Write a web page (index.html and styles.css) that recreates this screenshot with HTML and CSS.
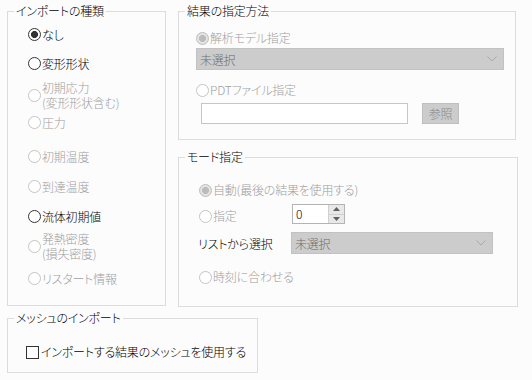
FILE: index.html
```html
<!DOCTYPE html>
<html lang="ja">
<head>
    <meta charset="UTF-8">
    <meta name="viewport" content="width=device-width, initial-scale=1.0">
    <title>インポート</title>

    <link rel="stylesheet" href="styles.css">
</head>

<body>
    <div class="dialog">
        <div class="top-row">
            <fieldset class="group import-type">
                <legend>インポートの種類</legend>
                <div class="import-list">
                    <div class="option"><span class="radio checked"></span><span class="text">なし</span></div>
                    <div class="option"><span class="radio"></span><span class="text">変形形状</span></div>
                    <div class="option disabled"><span class="radio"></span><span class="text">初期応力<br>(変形形状含む)</span></div>
                    <div class="option disabled"><span class="radio"></span><span class="text">圧力</span></div>
                    <div class="option disabled"><span class="radio"></span><span class="text">初期温度</span></div>
                    <div class="option disabled"><span class="radio"></span><span class="text">到達温度</span></div>
                    <div class="option"><span class="radio"></span><span class="text">流体初期値</span></div>
                    <div class="option disabled"><span class="radio"></span><span class="text">発熱密度<br>(損失密度)</span></div>
                    <div class="option disabled"><span class="radio"></span><span class="text">リスタート情報</span></div>
                </div>
            </fieldset>

            <div class="right-col">
                <fieldset class="group result-spec">
                    <legend>結果の指定方法</legend>
                    <div class="result-body">
                        <div class="option disabled"><span class="radio checked"></span><span class="text">解析モデル指定</span></div>
                        <div class="combo result-combo">
                            <span class="combo-text">未選択</span>
                            <svg class="chevron" width="10" height="6" viewBox="0 0 10 6"><polyline points="0.5,0.5 5,5 9.5,0.5" fill="none" stroke="#a9a9a9" stroke-width="1"/></svg>
                        </div>
                        <div class="option disabled pdt-option"><span class="radio"></span><span class="text">PDTファイル指定</span></div>
                        <div class="file-row">
                            <div class="file-input"></div>
                            <div class="browse-btn">参照</div>
                        </div>
                    </div>
                </fieldset>

                <fieldset class="group mode-spec">
                    <legend>モード指定</legend>
                    <div class="mode-body">
                        <div class="option disabled"><span class="radio checked"></span><span class="text">自動(最後の結果を使用する)</span></div>
                        <div class="spec-row">
                            <div class="option disabled mode-label"><span class="radio"></span><span class="text">指定</span></div>
                            <div class="spin">
                                <span class="spin-value">0</span>
                                <div class="spin-buttons">
                                    <div class="spin-btn"><svg width="7" height="4" viewBox="0 0 7 4"><polygon points="0,4 3.5,0 7,4" fill="#606060"/></svg></div>
                                    <div class="spin-btn"><svg width="7" height="4" viewBox="0 0 7 4"><polygon points="0,0 3.5,4 7,0" fill="#606060"/></svg></div>
                                </div>
                            </div>
                        </div>
                        <div class="list-row">
                            <span class="list-label">リストから選択</span>
                            <div class="combo mode-combo">
                                <span class="combo-text">未選択</span>
                                <svg class="chevron" width="10" height="6" viewBox="0 0 10 6"><polyline points="0.5,0.5 5,5 9.5,0.5" fill="none" stroke="#a9a9a9" stroke-width="1"/></svg>
                            </div>
                        </div>
                        <div class="option disabled time-option"><span class="radio"></span><span class="text">時刻に合わせる</span></div>
                    </div>
                </fieldset>
            </div>
        </div>

        <fieldset class="group mesh-import">
            <legend>メッシュのインポート</legend>
            <div class="mesh-body">
                <div class="option check-option"><span class="checkbox"></span><span class="text">インポートする結果のメッシュを使用する</span></div>
            </div>
        </fieldset>
    </div>
</body>
</html>
```

FILE: styles.css
```css
body{
    margin: 0;
    background-color: #fcfcfc;
    font-family: "Noto Sans CJK JP", "Noto Sans", sans-serif;
    font-size: 12px;
    font-weight: 300;
    font-feature-settings: "palt" 1;
    letter-spacing: -0.2px;
    color: #000;
    width: 532px;
    height: 380px;
    overflow: hidden;
}
.dialog{
    padding: 4px 0 0 7px;
}
.top-row{
    display: flex;
    align-items: flex-start;
    gap: 12px;
}
.right-col{
    display: flex;
    flex-direction: column;
    gap: 10px;
}

/* group boxes */
.group{
    box-sizing: border-box;
    margin: 0;
    padding: 0 0 0 6px;
    min-width: 0;
    border: 1px solid #dcdcdc;
}
.group legend{
    padding: 0 2px;
    line-height: 14px;
    height: 14px;
}
.import-type{
    width: 159px;
    height: 302px;
}
.result-spec{
    width: 338px;
    height: 136px;
}
.mode-spec{
    width: 340px;
    height: 157px;
}
.mesh-import{
    width: 251px;
    height: 62px;
    margin-top: 4px;
}

/* radio / check */
.option{
    display: flex;
    align-items: center;
    gap: 1px;
    line-height: 14px;
}
.option .text{
    white-space: nowrap;
}
.radio{
    box-sizing: border-box;
    flex: none;
    width: 13px;
    height: 13px;
    border: 1px solid #333;
    border-radius: 50%;
    background: #fff;
}
.radio.checked{
    background: radial-gradient(circle, #333 0 3.2px, #fff 3.8px);
}
.disabled{
    color: #a0a0a0;
}
.disabled .radio{
    border-color: #c4c4c4;
}
.disabled .radio.checked{
    border-color: #bcbcbc;
    background: radial-gradient(circle, #bcbcbc 0 3.2px, #e4e4e4 3.8px);
}
.checkbox{
    box-sizing: border-box;
    flex: none;
    width: 13px;
    height: 13px;
    border: 1px solid #333;
    background: #fff;
}

/* import list */
.import-list{
    display: grid;
    grid-template-rows: 29px 24px 35px 34px 30px 30px 22px 40px auto;
    align-items: start;
    padding: 9px 0 0 14px;
}
.import-list .text{
    line-height: 15px;
}

/* result spec */
.result-body{
    display: flex;
    flex-direction: column;
    align-items: flex-start;
    padding: 13px 0 0 11px;
}
.combo{
    box-sizing: border-box;
    display: flex;
    align-items: center;
    justify-content: space-between;
    height: 22px;
    padding: 0 6px 0 3px;
    background: #cccccc;
    border: 1px solid #c2c2c2;
    color: #6d6d6d;
}
.result-combo{
    width: 308px;
    margin-top: 3px;
}
.pdt-option{
    margin-top: 13px;
}
.file-row{
    display: flex;
    gap: 14px;
    margin: 6px 0 0 5px;
}
.file-input{
    box-sizing: border-box;
    width: 207px;
    height: 21px;
    background: #fff;
    border: 1px solid #c6c6c6;
}
.browse-btn{
    box-sizing: border-box;
    width: 37px;
    height: 21px;
    background: #cccccc;
    border: 1px solid #bfbfbf;
    color: #858585;
    text-align: center;
    line-height: 19px;
}

/* mode spec */
.mode-body{
    display: flex;
    flex-direction: column;
    align-items: flex-start;
    padding: 19px 0 0 14px;
}
.spec-row{
    display: flex;
    align-items: flex-start;
    margin-top: 7px;
}
.mode-label{
    width: 93px;
    margin-top: 5px;
}
.spin{
    box-sizing: border-box;
    display: flex;
    justify-content: space-between;
    width: 53px;
    height: 20px;
    background: #fff;
    border: 1px solid #b4b4b4;
}
.spin-value{
    padding-left: 3px;
    line-height: 18px;
}
.spin-buttons{
    display: flex;
    flex-direction: column;
    width: 16px;
}
.spin-btn{
    flex: 1;
    display: flex;
    align-items: center;
    justify-content: center;
    background: #e8e8e8;
    border-left: 1px solid #d0d0d0;
}
.spin-btn + .spin-btn{
    border-top: 1px solid #d0d0d0;
}
.list-row{
    display: flex;
    align-items: center;
    margin-top: 8px;
}
.list-label{
    width: 93px;
    margin-left: -1px;
}
.mode-combo{
    width: 202px;
}
.time-option{
    margin-top: 16px;
}

/* mesh */
.mesh-body{
    padding: 20px 0 0 12px;
}
.check-option{
    gap: 2px;
}
```
